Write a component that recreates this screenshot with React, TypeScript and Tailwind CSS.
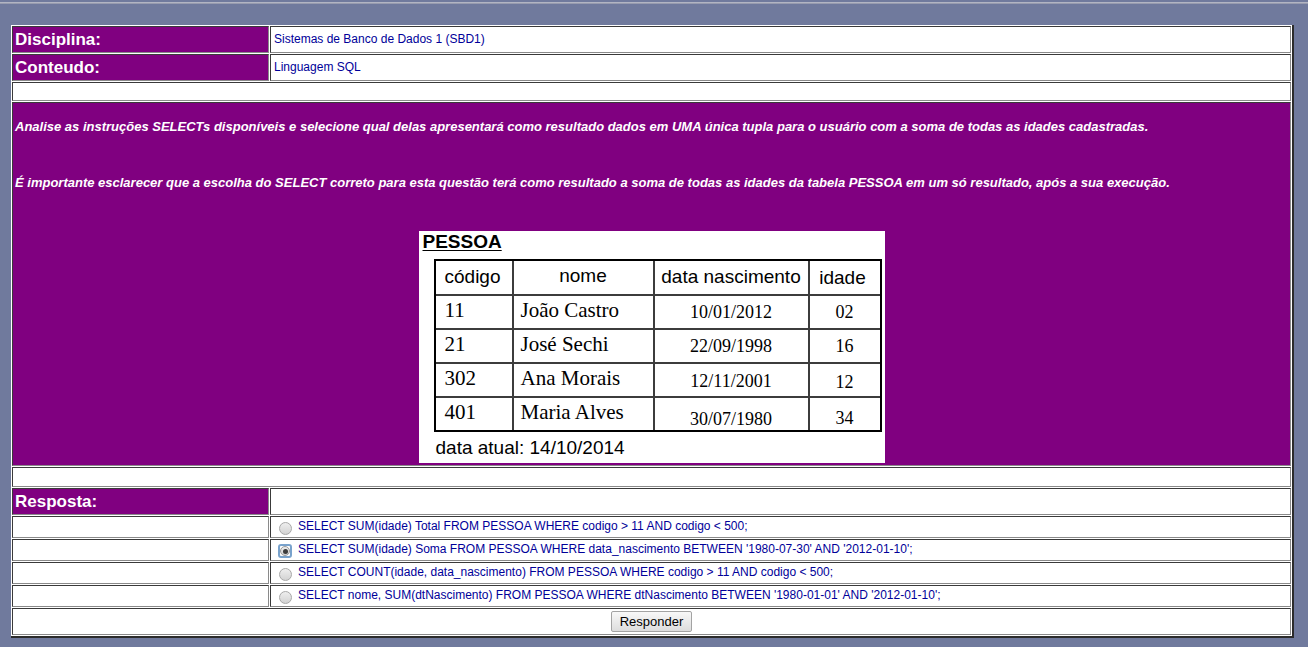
import React from "react";

const cell =
  "border border-t-[#3a3a3a] border-l-[#3a3a3a] border-r-[#8a8a8a] border-b-[#8a8a8a]";

const options = [
  { text: "SELECT SUM(idade) Total FROM PESSOA WHERE codigo > 11 AND codigo < 500;", checked: false },
  { text: "SELECT SUM(idade) Soma FROM PESSOA WHERE data_nascimento BETWEEN '1980-07-30' AND '2012-01-10';", checked: true },
  { text: "SELECT COUNT(idade, data_nascimento) FROM PESSOA WHERE codigo > 11 AND codigo < 500;", checked: false },
  { text: "SELECT nome, SUM(dtNascimento) FROM PESSOA WHERE dtNascimento BETWEEN '1980-01-01' AND '2012-01-10';", checked: false },
];

const pessoas = [
  { codigo: "11", nome: "João Castro", data: "10/01/2012", idade: "02", dataPad: "pt-0", idadePad: "pt-0" },
  { codigo: "21", nome: "José Sechi", data: "22/09/1998", idade: "16", dataPad: "pt-0", idadePad: "pt-0" },
  { codigo: "302", nome: "Ana Morais", data: "12/11/2001", idade: "12", dataPad: "pt-[2px]", idadePad: "pt-[4px]" },
  { codigo: "401", nome: "Maria Alves", data: "30/07/1980", idade: "34", dataPad: "pt-[11px]", idadePad: "pt-[8px]" },
];

function Radio({ checked }: { checked: boolean }) {
  if (checked) {
    return (
      <span className="-ml-[1px] flex h-[14px] w-[14px] shrink-0 translate-y-[1px] items-center justify-center rounded-[3px] border-2 border-[#78a2cc]">
        <span className="flex h-[10px] w-[10px] items-center justify-center rounded-full border border-[#9a9a9a] bg-linear-to-b from-[#ededed] to-[#d2d2d2]">
          <span className="h-[5px] w-[5px] rounded-full bg-[#3c3c3c]" />
        </span>
      </span>
    );
  }
  return (
    <span className="h-[13px] w-[13px] shrink-0 translate-y-[1px] rounded-full border border-[#a8a8a8] bg-linear-to-b from-[#eeeeee] to-[#d3d3d3]" />
  );
}

function PessoaImage() {
  return (
    <div className="mx-auto h-[232px] w-[466px] bg-white text-black">
      <div className="pl-[4px] pt-[1px] text-[19px] font-bold leading-[20px] underline underline-offset-2">
        PESSOA
      </div>
      <div className="ml-[15px] mt-[7px] grid w-[448px] grid-cols-[76px_139px_153px_70px] grid-rows-[33px_32px_32px_32px_32px] gap-[2px] border-2 border-black bg-[#3c3c3c]">
        <div className="flex items-center bg-white pl-[9px] text-[19px]">código</div>
        <div className="flex items-center justify-center bg-white pb-[2px] text-[19px]">nome</div>
        <div className="flex items-center justify-center bg-white text-[19px]">data nascimento</div>
        <div className="flex items-center justify-center bg-white pr-[4px] pt-[2px] text-[19px]">idade</div>
        {pessoas.map((p) => (
          <React.Fragment key={p.codigo}>
            <div className="flex items-center bg-white pb-[3px] pl-[9px] font-['Liberation_Serif',serif] text-[21px]">
              {p.codigo}
            </div>
            <div className="flex items-center bg-white pb-[3px] pl-[7px] font-['Liberation_Serif',serif] text-[21px]">
              {p.nome}
            </div>
            <div className={`flex items-center justify-center bg-white font-['Liberation_Serif',serif] text-[18px] ${p.dataPad}`}>
              {p.data}
            </div>
            <div className={`flex items-center justify-center bg-white font-['Liberation_Serif',serif] text-[18px] ${p.idadePad}`}>
              {p.idade}
            </div>
          </React.Fragment>
        ))}
      </div>
      <div className="mt-[5px] pl-[17px] text-[19px] leading-[22px]">data atual: 14/10/2014</div>
    </div>
  );
}

export default function App() {
  return (
    <div className="min-h-screen bg-[#707a9d] pb-[10px] font-['Liberation_Sans',Arial,sans-serif]">
      <div className="h-[2px]" />
      <div className="h-px bg-[#b2b5c3]" />
      <div className="h-px bg-[#979bae]" />

      <div className="ml-[11px] mt-[21px] grid w-[1283px] grid-cols-[257px_1021px] gap-[1px] border-b-2 border-r-2 border-[#2b2b2b] bg-white p-[1px]">
        {/* Disciplina */}
        <div className={`${cell} flex h-[27px] items-center bg-[#800080] pl-[2px] text-[17px] font-bold text-white`}>
          Disciplina:
        </div>
        <div className={`${cell} flex h-[27px] items-center bg-white pb-[1px] pl-[3px] text-[12px] text-[#000099]`}>
          Sistemas de Banco de Dados 1 (SBD1)
        </div>

        {/* Conteudo */}
        <div className={`${cell} flex h-[27px] items-center bg-[#800080] pl-[2px] text-[17px] font-bold text-white`}>
          Conteudo:
        </div>
        <div className={`${cell} flex h-[27px] items-center bg-white pb-[1px] pl-[3px] text-[12px] text-[#000099]`}>
          Linguagem SQL
        </div>

        <div className={`${cell} col-span-2 h-[19px] bg-white`} />

        {/* Enunciado */}
        <div className={`${cell} col-span-2 h-[364px] bg-[#800080] text-white`}>
          <p className="pl-[2px] pt-[16px] text-[13px] font-bold italic leading-[15px]">
            Analise as instruções SELECTs disponíveis e selecione qual delas apresentará como resultado dados em UMA única tupla para o usuário com a soma de todas as idades cadastradas.
          </p>
          <p className="mt-[41px] pl-[2px] text-[13px] font-bold italic leading-[15px]">
            É importante esclarecer que a escolha do SELECT correto para esta questão terá como resultado a soma de todas as idades da tabela PESSOA em um só resultado, após a sua execução.
          </p>
          <div className="mt-[41px]">
            <PessoaImage />
          </div>
        </div>

        <div className={`${cell} col-span-2 h-[20px] bg-white`} />

        {/* Resposta */}
        <div className={`${cell} flex h-[27px] items-center bg-[#800080] pl-[2px] text-[17px] font-bold text-white`}>
          Resposta:
        </div>
        <div className={`${cell} h-[27px] bg-white`} />

        {options.map((o) => (
          <React.Fragment key={o.text}>
            <div className={`${cell} h-[22px] bg-white`} />
            <div className={`${cell} flex h-[22px] items-center bg-white pl-[8px]`}>
              <Radio checked={o.checked} />
              <span className="ml-[6px] -translate-y-[1px] text-[12px] text-[#000099]">{o.text}</span>
            </div>
          </React.Fragment>
        ))}

        {/* Botão */}
        <div className={`${cell} col-span-2 flex h-[27px] items-center justify-center bg-white`}>
          <button className="h-[21px] w-[81px] rounded-[2px] border border-[#a3a3a3] bg-linear-to-b from-[#f8f8f8] to-[#dddddd] text-[13px] text-black">
            Responder
          </button>
        </div>
      </div>
    </div>
  );
}
